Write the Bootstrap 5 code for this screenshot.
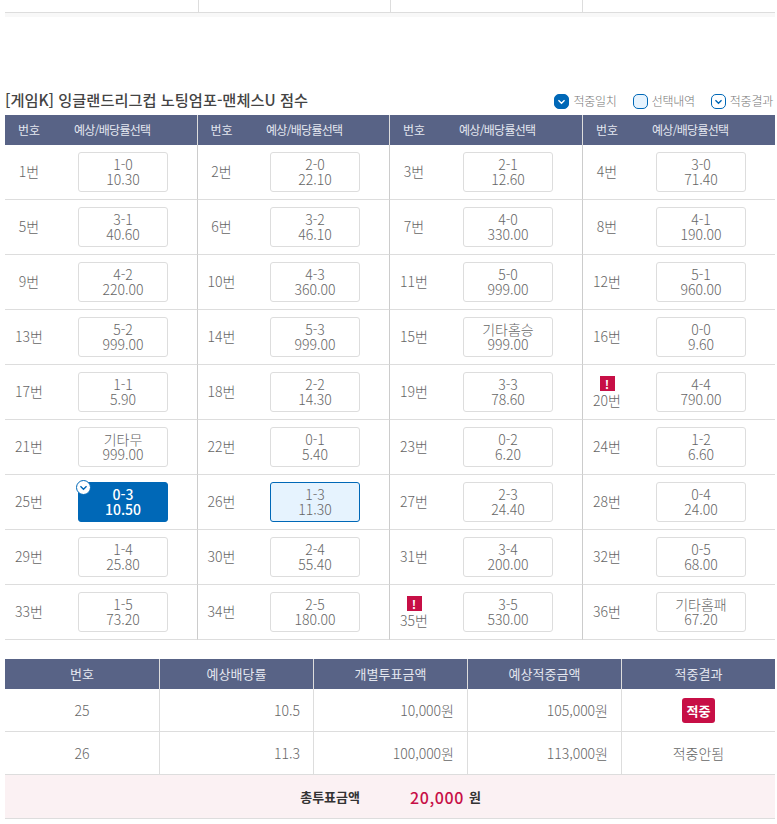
<!DOCTYPE html>
<html lang="ko">
<head>
    <meta charset="UTF-8">
    <meta name="viewport" content="width=device-width, initial-scale=1.0">
    <title>적중결과</title>
    <link href="https://cdn.jsdelivr.net/npm/bootstrap@5.3.0/dist/css/bootstrap.min.css" rel="stylesheet">
    <style>
        body {
            background: #fff;
            color: #666;
            font-family: "Noto Sans CJK KR", "Noto Sans", sans-serif;
            font-size: 14px;
            font-weight: 300;
            overflow: hidden;
        }
        .page-wrap { padding: 0 2px 0 5px; }
        .top-rest { height: 17px; background: #f8f8f8; }
        .top-rest-grid { height: 13px; background: #fff; border-bottom: 1px solid #ddd; display: grid; grid-template-columns: 193px 192px 192px 1fr; }
        .top-rest-grid div + div { border-left: 1px solid #ddd; }
        .game-head { height: 98px; padding-bottom: 4px; }
        .game-title { font-size: 15.25px; font-weight: 500; color: #444; line-height: 22px; margin: 0 0 1px; }
        .legend-wrap { gap: 16px; padding-bottom: 2px; margin-right: 2px; }
        .legend-item { font-size: 12px; color: #777; line-height: 16px; gap: 4px; letter-spacing: -.25px; }
        .chk { width: 15px; height: 15px; border-radius: 5px; border: 1px solid #0068b7; background: #fff; display: block; }
        .chk.on { background: #0068b7; }
        .chk.sel { background: #e6f3fe; }
        .odds-table, .sum-table { table-layout: fixed; width: 100%; margin: 0; border-collapse: separate; border-spacing: 0; }
        .odds-table th, .sum-table th {
            background: #586386; color: #e4e7f0; font-size: 12px; font-weight: 400; height: 30px; padding: 0; vertical-align: middle; border: 0;
        }
        .odds-table td { height: 55px; padding: 0; vertical-align: middle; border: 0; border-bottom: 1px solid #ddd; color: #666; background: #fff; }
        .odds-table .no-cell { text-align: center; line-height: 19px; padding-bottom: 2px; }
        .odds-table th.odd-head { text-align: left; padding-left: 21px; letter-spacing: -.7px; }
        .odds-table .split { border-left: 1px solid #ccc; }
        .odds-table th.split { border-left-color: #ddd; }
        .pick-btn {
            position: relative; display: block; width: 90px; height: 40px; margin-left: 25px;
            border: 1px solid #ddd; border-radius: 3px; text-align: center; line-height: 15px; padding-top: 4px; color: #666; background: #fff;
        }
        .pick-btn.hit { background: #0068b7; border-color: #0068b7; color: #fff; font-weight: 500; }
        .pick-btn.mine { background: #e6f3fe; border-color: #0068b7; }
        .hit-mark { position: absolute; left: -3px; top: -3px; width: 15px; height: 15px; border-radius: 50%; background: #fff; border: 1px solid #0068b7; display: block; }
        .warn-mark { display: block; width: 15px; height: 15px; background: #c70f46; color: #fff; font-size: 12px; font-weight: 700; line-height: 15px; text-align: center; margin: 3px auto 0; }
        .sum-wrap { margin-top: 19px; }
        .sum-table th { font-size: 13px; text-align: center; border-left: 1px solid #ddd; }
        .sum-table th:first-child, .sum-table td:first-child { border-left: 0; }
        .sum-table td { height: 43px; padding: 0 13px; vertical-align: middle; border: 0; border-left: 1px solid #ddd; border-bottom: 1px solid #ddd; color: #666; background: #fff; }
        .result-tag { display: inline-block; background: #c70f46; color: #fff; font-size: 13px; font-weight: 700; line-height: 25px; padding: 0 5px; border-radius: 3px; }
        .total-row { height: 44px; background: #fbf1f3; border-bottom: 1px solid #ddd; }
        .total-label { font-size: 13px; font-weight: 700; color: #333; width: 355px; text-align: right; padding-right: 0; }
        .total-val { font-size: 16px; font-weight: 500; color: #c70f46; margin-left: 50px; letter-spacing: .6px; }
        .total-unit { font-size: 13px; font-weight: 700; color: #333; margin-left: 5px; }
    </style>
</head>
<body>
    <div class="page-wrap">
        <!-- rest of the previous game table -->
        <div class="top-rest">
            <div class="top-rest-grid"><div></div><div></div><div></div><div></div></div>
        </div>

        <div class="game-head d-flex justify-content-between align-items-end">
            <h2 class="game-title">[게임K] 잉글랜드리그컵 노팅엄포-맨체스U 점수</h2>
            <div class="legend-wrap d-flex align-items-center">
                <span class="legend-item d-flex align-items-center"><svg class="chk on" viewBox="0 0 15 15"><path d="M4 6l3.5 3.5L11 6" fill="none" stroke="#fff" stroke-width="1.6"/></svg>적중일치</span>
                <span class="legend-item d-flex align-items-center"><span class="chk sel"></span>선택내역</span>
                <span class="legend-item d-flex align-items-center"><svg class="chk" viewBox="0 0 15 15"><path d="M4 6l3.5 3.5L11 6" fill="none" stroke="#0068b7" stroke-width="1.6"/></svg>적중결과</span>
            </div>
        </div>

        <table class="odds-table" id="oddsTable">
            <colgroup>
                <col style="width:48px"><col style="width:144px">
                <col style="width:48px"><col style="width:144px">
                <col style="width:49px"><col style="width:144px">
                <col style="width:49px"><col>
            </colgroup>
            <thead>
                <tr id="oddsHead"></tr>
            </thead>
            <tbody></tbody>
        </table>

        <div class="sum-wrap">
            <table class="sum-table">
                <thead>
                    <tr><th>번호</th><th>예상배당률</th><th>개별투표금액</th><th>예상적중금액</th><th>적중결과</th></tr>
                </thead>
                <tbody>
                    <tr>
                        <td class="text-center">25</td><td class="text-end">10.5</td><td class="text-end">10,000원</td><td class="text-end">105,000원</td>
                        <td class="text-center"><span class="result-tag">적중</span></td>
                    </tr>
                    <tr>
                        <td class="text-center">26</td><td class="text-end">11.3</td><td class="text-end">100,000원</td><td class="text-end">113,000원</td>
                        <td class="text-center">적중안됨</td>
                    </tr>
                </tbody>
            </table>
            <div class="total-row d-flex align-items-center">
                <span class="total-label">총투표금액</span>
                <span class="total-val">20,000</span>
                <span class="total-unit">원</span>
            </div>
        </div>
    </div>

    <script>
        const picks = ["1-0|10.30","2-0|22.10","2-1|12.60","3-0|71.40","3-1|40.60","3-2|46.10","4-0|330.00","4-1|190.00",
            "4-2|220.00","4-3|360.00","5-0|999.00","5-1|960.00","5-2|999.00","5-3|999.00","기타홈승|999.00","0-0|9.60",
            "1-1|5.90","2-2|14.30","3-3|78.60","4-4|790.00","기타무|999.00","0-1|5.40","0-2|6.20","1-2|6.60",
            "0-3|10.50","1-3|11.30","2-3|24.40","0-4|24.00","1-4|25.80","2-4|55.40","3-4|200.00","0-5|68.00",
            "1-5|73.20","2-5|180.00","3-5|530.00","기타홈패|67.20"];
        const warned = [20, 35];
        const check = '<svg class="hit-mark" viewBox="0 0 15 15"><path d="M4 6l3.5 3.5L11 6" fill="none" stroke="#0068b7" stroke-width="1.6"/></svg>';

        // Header row
        let head = "";
        for (let g = 0; g < 4; g++) {
            head += `<th class="text-center ${g ? "split" : ""}">번호</th><th class="odd-head">예상/배당률선택</th>`;
        }
        document.getElementById("oddsHead").innerHTML = head;

        // Body rows, four games per row
        let rows = "";
        picks.forEach((p, i) => {
            const no = i + 1;
            const [score, odds] = p.split("|");
            let cls = "";
            if (no === 25) cls = "hit";
            if (no === 26) cls = "mine";
            if (i % 4 === 0) rows += "<tr>";
            rows += `<td class="no-cell ${i % 4 ? "split" : ""}">${warned.includes(no) ? '<span class="warn-mark">!</span>' : ""}${no}번</td>`;
            rows += `<td><span class="pick-btn ${cls}">${no === 25 ? check : ""}${score}<br>${odds}</span></td>`;
            if (i % 4 === 3) rows += "</tr>";
        });
        document.querySelector("#oddsTable tbody").innerHTML = rows;
    </script>
</body>
</html>
